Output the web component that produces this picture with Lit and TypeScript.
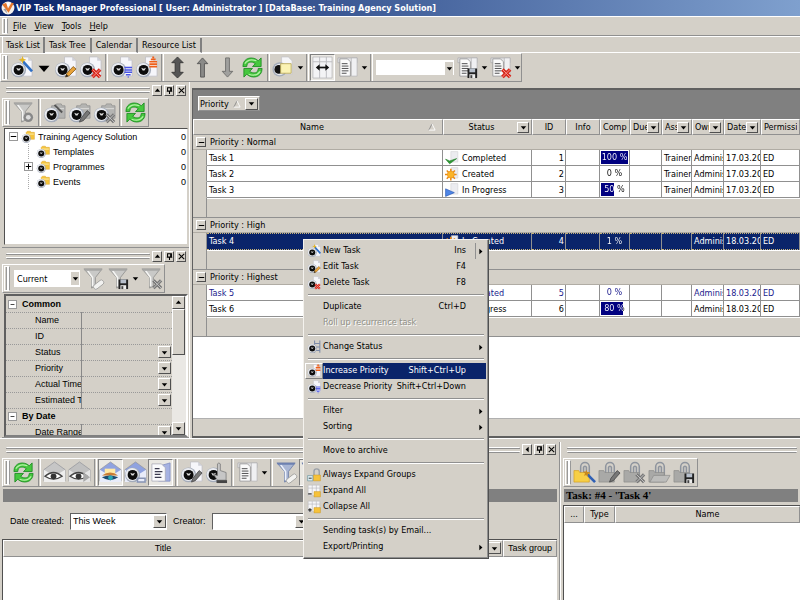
import { LitElement, html, svg, css, nothing, TemplateResult } from "lit";
import { customElement } from "lit/decorators.js";
import { classMap } from "lit/directives/class-map.js";
import { styleMap } from "lit/directives/style-map.js";

/* ---------- icon parts, all drawn in a 24 x 24 box ---------- */

const page = svg`<path d="M11 1h8l4 4v16H11z" fill="#f6f6fa" stroke="#b8b8c2" stroke-width=".7"/><path d="M19 1v4h4z" fill="#cfd0d8"/>`;
const clock = svg`<circle cx="9" cy="14.500" r="7.800" fill="#a4acba"/><circle cx="8.500" cy="14" r="6.800" fill="#e9ebf0"/><circle cx="9" cy="14.500" r="5.200" fill="#0c0c0c"/><path d="M6.500 12.300l2.500 1 2.500-1-1.600 2.700H8z" fill="#e0e0e0"/>`;
const greyFolder = svg`<path d="M9 5h4l1-2h5l1 2h3v13H9z" fill="#b4b4b2" stroke="#8c8c8a" stroke-width=".7"/><path d="M10 8h12" stroke="#dcdcda"/>`;
const yellowFolder = svg`<path d="M9 4l2-2h5l1 2h6v12H9z" fill="#f5c43c" stroke="#d59a1c" stroke-width=".7"/><path d="M10 7h12" stroke="#fbe79a" stroke-width="2"/>`;
const wand = svg`<path d="M13 5l10 11" stroke="#2f6fc4" stroke-width="2.800"/><path d="M13 0l1.200 2.800L17 4l-2.800 1.200L13 8l-1.200-2.800L9 4l2.800-1.200z" fill="#e2b52a"/>`;
const pencil = svg`<path d="M12 22l1.500-4L20 11l3 2.500L16 20.500z" fill="#e8a33a" stroke="#7d5418" stroke-width=".8"/><path d="M12 22l1-3 2 2z" fill="#222"/>`;
const greyPencil = svg`<path d="M12 22l1.500-4L20 10l3 2.500L16 20.500z" fill="#777" stroke="#444" stroke-width=".8"/>`;
const redCross = svg`<path d="M14 14l8 8M22 14l-8 8" stroke="#d8281c" stroke-width="3.800"/><path d="M14 14l8 8M22 14l-8 8" stroke="#f6948a" stroke-width="1"/>`;
const greyCross = svg`<path d="M14 14l8 8M22 14l-8 8" stroke="#777" stroke-width="3.400"/><path d="M14 14l8 8M22 14l-8 8" stroke="#c4c4c4" stroke-width="1"/>`;
const blueDown = svg`<path d="M15 12h8M15 14.500h8M15 17h8M16.500 19.500h5M18.500 22h1" stroke="#4a55e4" stroke-width="1.600"/>`;
const orangeUp = svg`<path d="M18 1.500h2M16.500 3.500h5M15 6h8M15 8.500h8M15 11h8" stroke="#ee5f18" stroke-width="1.800"/>`;
const disk = svg`<path d="M12 13h10v10H12z" fill="#222"/><path d="M14 13h6v4h-6z" fill="#b8c0cc"/><path d="M14 19h6v4h-6z" fill="#eee"/><path d="M15 20h2v3h-2z" fill="#444"/>`;
const funnelShape = "M2 2h19l-7 9v9l-4 2V11z";
const funnel = svg`<path d=${funnelShape} fill="#c9c9c7" stroke="#8b8b89" stroke-width=".8"/><path d="M6 4l5 7v9" fill="none" stroke="#f6f6f4" stroke-width="1.600"/><path d="M2 2h19l-1 2H3z" fill="#a6a6a4"/>`;
const blueFunnel = svg`<path d=${funnelShape} fill="#a9b6d4" stroke="#6678a4" stroke-width=".8"/><path d="M6 4l5 7v9" fill="none" stroke="#eef2fb" stroke-width="1.600"/><path d="M2 2h19l-1 2H3z" fill="#6d80b0"/>`;
const eraser = svg`<rect x="11" y="16" width="12" height="5" rx="2" transform="rotate(-38 17 18)" fill="#f2f2f0" stroke="#9a9a98" stroke-width=".8"/>`;
const columns = svg`<path d="M2 2h20v5H2z" fill="#e4e4e6" stroke="#a8a8aa" stroke-width=".7"/><path d="M16 2h6v19h-6z" fill="#f0f0f2" stroke="#b0b0b2" stroke-width=".7"/><path d="M4 3h8l3 3v15H4z" fill="#fafafa" stroke="#8e8e90" stroke-width=".8"/><path d="M6 8h6M6 10.500h7M6 13h7M6 15.500h7M6 18h5" stroke="#4a4a4c"/>`;
const clip = svg`<path d="M8 15V6a4.500 4.500 0 019 0V15M11 14V6.500a1.600 1.600 0 013 0v7" fill="none" stroke="#8e949e" stroke-width="1.600"/>`;
const clipFolder = (fill: string, edge: string) => svg`${clip}<path d="M1 10h5l1 2h10v10H1z" fill=${fill} stroke=${edge} stroke-width=".7"/>`;
const envelope = (a: string, b: string) => svg`<path d="M1 9l11-8 11 8v12H1z" fill=${a} stroke="#8e9098" stroke-width=".7"/><path d="M1 9l11 7 11-7v13H1z" fill=${b}/>`;
const eye = svg`<path d="M2 16q9-8 18 0q-9 6-18 0z" fill="#fff" stroke="#444" stroke-width="1.300"/><circle cx="11" cy="16" r="3" fill="#333"/>`;
const sheet = svg`<path d="M2 2h20v18H2z" fill="#f6f6f8" stroke="#b4b4b8" stroke-width=".8"/><path d="M2 7h20M9 2v18M16 2v18" stroke="#b4b4b8"/>`;

const icons: Record<string, TemplateResult> = {
  logo: svg`<circle cx="12" cy="12" r="11" fill="#f3f0ec"/><path d="M2 6l7-3 3 10 6-10 4 1-9 16z" fill="#e4762c"/><path d="M4 14l7 8-3-9z" fill="#9a9aa2"/><path d="M9 3l6-1-3 8z" fill="#fff"/>`,
  newTask: svg`${page}${clock}${wand}`,
  editTask: svg`${page}${clock}${pencil}`,
  deleteTask: svg`${page}${clock}${redCross}`,
  lower: svg`${page}${clock}${blueDown}`,
  raise: svg`${page}${clock}${orangeUp}`,
  status: svg`<path d="M13 1v21M22 1v21M13 6h9M13 12h9M13 18h9" stroke="#7d8ba8" stroke-width="1.800"/>${clock}`,
  upDown: svg`<path d="M12 1l6 6h-3.500v10H18l-6 6-6-6h3.500V7H6z" fill="#555" stroke="#2e2e2e" stroke-width=".8"/>`,
  up: svg`<path d="M12 2l5.500 6H14v14h-4V8H6.500z" fill="#8a8a88" stroke="#505050" stroke-width=".9"/>`,
  down: svg`<path d="M12 22l5.500-6H14V2h-4v14H6.500z" fill="#a0a09e" stroke="#6a6a68" stroke-width=".9"/>`,
  refresh: svg`<path d="M2 11C2 1 13 0 18 5l3-3v9h-9l3-3C11 5 6 6 6 11z" fill="#46c83e" stroke="#1d8a22" stroke-width=".9"/><path d="M22 13c0 10-11 11-16 6l-3 3v-9h9l-3 3c4 3 9 2 9-3z" fill="#46c83e" stroke="#1d8a22" stroke-width=".9"/><path d="M4 8q4-6 12-3M20 16q-4 6-12 3" fill="none" stroke="#b5f2a6" stroke-width="1.200"/>`,
  note: svg`<path d="M10 1h7l4 4v14H10z" fill="#f6f6f8" stroke="#c0c0c8" stroke-width=".7"/><circle cx="8" cy="14" r="7.500" fill="#a4acba"/><circle cx="8" cy="14" r="6" fill="#e9ebf0"/><circle cx="7" cy="14" r="4.500" fill="#111"/><path d="M9 8h11v10H9z" fill="#fbf3b4" stroke="#b7a757" stroke-width=".9"/>`,
  fit: svg`<path d="M2 1h20v22H2z" fill="#f3f3f5" stroke="#b4b4b6" stroke-width=".8"/><path d="M2 6h20M9 1v22M16 1v22" stroke="#bcbcc0"/><path d="M7 12h10" stroke="#111" stroke-width="1.800"/><path d="M5 12l4-3.500v7zM19 12l-4-3.500v7z" fill="#111"/>`,
  columns,
  columnsSave: svg`${columns}${disk}`,
  columnsDelete: svg`${columns}${redCross}`,
  funnelClock: svg`${funnel}<circle cx="17" cy="17" r="5" fill="#888"/><circle cx="17" cy="17" r="2.500" fill="#ddd"/>`,
  folderNew: svg`${greyFolder}${clock}<path d="M12 4l8 8" stroke="#555" stroke-width="2"/>`,
  folderEdit: svg`${greyFolder}${clock}${greyPencil}`,
  folderDelete: svg`${greyFolder}${clock}${greyCross}`,
  treeFolder: svg`${yellowFolder}${clock}`,
  funnelErase: svg`${funnel}${eraser}`,
  funnelSave: svg`${funnel}${disk}`,
  funnelDelete: svg`${funnel}${greyCross}`,
  blueFunnelErase: svg`${blueFunnel}${eraser}`,
  blueFunnel,
  eyeOpen: svg`${envelope("#c6c6c6", "#eeeeee")}${eye}`,
  eyeStep: svg`${envelope("#c0c0c0", "#e4e4e4")}${eye}<path d="M16 12l7 5-7 5z" fill="#a8a8a8"/>`,
  mailEye: svg`${envelope("#8fa2e0", "#e8ecfa")}<path d="M6 8h11v7H6z" fill="#ffe9a6"/><path d="M3 15q9-6 17 0z" fill="#c97b35"/><path d="M3 17q9 6 17 0q-9-4-17 0z" fill="#1b4a70"/><circle cx="12" cy="17.500" r="2.500" fill="#29a7b5"/>`,
  mailClock: svg`${envelope("#8fa2e0", "#e8ecfa")}${clock}<path d="M14 18h8v4h-8z" fill="none" stroke="#8794b4" stroke-width="1.600"/>`,
  mailPage: svg`<path d="M8 6l14-4v19H10z" fill="#a6b2e2" stroke="#7f8cc0" stroke-width=".8"/><path d="M3 3h10l4 4v14H3z" fill="#fafafc" stroke="#a8a8b4" stroke-width=".8"/><path d="M6 8h5M6 11h8M6 14h6M6 17h7" stroke="#3c3c50" stroke-width="1.300"/>`,
  clockEdit: svg`${page}${clock}${greyPencil}`,
  clockHand: svg`${clock}<path d="M13 3q1.500-2 3 0v7l6 2v8h-9l-4-6 4 1z" fill="#c6c6c6" stroke="#777" stroke-width=".8"/><path d="M12 20h11v3H12z" fill="#444"/>`,
  clipNew: svg`${clipFolder("#f7cf46", "#d09c22")}<path d="M15 14l8 8" stroke="#2f5fb4" stroke-width="2.800"/><path d="M14 9l1 2.500 3 .5-2.500 1.500.5 3-2-2-2.500 1 1-2.500-2-2h3z" fill="#c98a1c"/>`,
  clipEdit: svg`${clipFolder("#a9a9a7", "#8a8a88")}${greyPencil}`,
  clipDelete: svg`${clipFolder("#a9a9a7", "#8a8a88")}${greyCross}`,
  clipOpen: svg`${clipFolder("#a9a9a7", "#8a8a88")}<path d="M6 15h17l-4 7H2z" fill="#bdbdbb" stroke="#8a8a88" stroke-width=".7"/>`,
  clipSave: svg`${clipFolder("#a9a9a7", "#8a8a88")}${disk}`,
  lock: svg`<path d="M12 12V6a4.500 4.500 0 019 0v6" fill="none" stroke="#9aa0a8" stroke-width="2.400"/><path d="M11 12h12v10H11z" fill="#f6c23a" stroke="#c8921c" stroke-width=".8"/><path d="M1 13h9v9H1z" fill="#dcecf0" stroke="#5f8a94"/><path d="M3 17.500h5" stroke="#222" stroke-width="1.500"/>`,
  expand: svg`${sheet}<path d="M12 13h11v9H12z" fill="#f6c23a" stroke="#c8921c" stroke-width=".8"/><path d="M2 17h6" stroke="#222" stroke-width="2"/>`,
  collapse: svg`${sheet}<path d="M12 13h11v9H12z" fill="#f6c23a" stroke="#c8921c" stroke-width=".8"/><path d="M2 17h6M5 14v6" stroke="#222" stroke-width="2"/>`,
  completed: svg`<path d="M10 1h12v18H10z" fill="#ececf0" stroke="#c8c8cc" stroke-width=".8"/><path d="M1 14l7 8 12-9-12 4z" fill="#2f9a34" stroke="#1c7a24"/>`,
  created: svg`<path d="M11 1h11v18H11z" fill="#ececf0" stroke="#c8c8cc" stroke-width=".8"/><path d="M10 3v20M0 13h20M3 6l14 14M17 6L3 20" stroke="#e98a14" stroke-width="2.600"/><circle cx="10" cy="13" r="6" fill="#fbb528" stroke="#e98a14"/>`,
  progress: svg`<path d="M10 1h12v18H10z" fill="#ececf0" stroke="#c8c8cc" stroke-width=".8"/><path d="M1 10l15 6.500L1 23z" fill="#4f86e6" stroke="#1f4fae"/>`,
};

const icon = (name: string, cls = "i22") =>
  html`<svg class=${cls} viewBox="0 0 24 24" aria-hidden="true">${icons[name]}</svg>`;

const solid: Record<string, string> = {
  down: "M1 3h7L4.500 7z",
  up: "M1 6h7L4.500 2z",
  left: "M6 1v7L2 4.500z",
  right: "M3 1v7l4-3.500z",
};
const lines: Record<string, string> = {
  close: "M1 1l7 7M8 1L1 8",
  pin: "M2 1h5v4H2zM6 1v4M1 5.500h7M4.500 5v4",
  minus: "M1 4.500h7",
  plus: "M1 4.500h7M4.500 1v7",
};
const glyph = (name: string, cls = "g7") => html`<svg class=${cls} viewBox="0 0 9 9" aria-hidden="true">
  <path d=${solid[name] ?? lines[name]} fill=${name in solid ? "currentColor" : "none"}
    stroke=${name in solid ? "none" : "currentColor"} stroke-width="1.300"/></svg>`;
const sortMark = html`<svg class="sort" viewBox="0 0 9 9" aria-hidden="true"><path d="M1 8l3.500-7" stroke="#888" fill="none"/><path d="M1 8h7L4.500 1" stroke="#fff" fill="none"/></svg>`;

/* ---------- shared look ---------- */

const shared = css`
  * { box-sizing: border-box; }
  button, select, input { font: inherit; color: inherit; margin: 0; padding: 0; border: 0; border-radius: 0; background: none; outline: 0; }
  svg { display: block; flex: none; }
  .i22 { width: 23px; height: 23px; }
  .i14 { width: 14px; height: 14px; }
  .g5 { width: 5px; height: 5px; }
  .g7 { width: 7px; height: 7px; }
  .g9 { width: 9px; height: 9px; }
  .g14 { width: 14px; height: 14px; }
  .raised { display: grid; place-items: center; flex: none; background: #d4d0c8; border: 1px solid; border-color: #fff #505050 #505050 #fff; }
  .drop { width: 13px; height: 12px; }
  .grip { flex: none; width: 6px; margin: 1px 1px; border: 1px solid #999; border-color: #fff #999 #fff #fff; background: linear-gradient(90deg, #d4d0c8 1px, #999 1px, #999 2px, #fff 2px); }
`;

/* A strip of icon buttons. Entries: icon name, "|" separator, "v" drop arrow, "V" large drop arrow, "*name" pressed. */
@customElement("tool-strip")
export class ToolStrip extends LitElement {
  static properties = { items: { attribute: false } };
  declare items: string[];
  static styles = [shared, css`
    :host { display: flex; flex: none; height: 29px; width: max-content; border: 1px solid; border-color: #fff #909090 #909090 #fff; align-items: stretch; }
    .tool { width: 25px; display: grid; place-items: center; flex: none; }
    .pressed { border: 1px solid; border-color: #808080 #fff #fff #808080; background: #eae8e3; }
    .small { width: 8px; }
    .large { width: 19px; }
    .sep { width: 3px; margin: 0 1px 0 2px; border-left: 1px solid #909090; border-right: 1px solid #fff; flex: none; }
  `];
  render() {
    return html`<span class="grip"></span>${(this.items ?? []).map((it) => {
      if (it === "|") return html`<span class="sep"></span>`;
      if (it === "-") return html`<slot></slot>`;
      if (it === "v" || it === "V")
        return html`<button class=${classMap({ tool: true, small: it === "v", large: it === "V" })} aria-label="More">${glyph("down", it === "v" ? "g7" : "g14")}</button>`;
      const on = it.startsWith("*");
      const name = on ? it.slice(1) : it;
      return html`<button class=${classMap({ tool: true, pressed: on })} aria-label=${name}>${icon(name)}</button>`;
    })}`;
  }
}

@customElement("dock-caption")
export class DockCaption extends LitElement {
  static properties = { arrow: { type: String } };
  declare arrow: string;
  static styles = [shared, css`
    :host { display: flex; flex: none; height: 16px; align-items: center; gap: 2px; padding: 0 3px 0 4px; }
    .bars { flex: 1; height: 6px; border: 1px solid; border-color: #fff transparent #909090; background: linear-gradient(#909090 1px, transparent 1px, transparent 3px, #fff 3px); }
    .cap { width: 10px; height: 11px; }
  `];
  render() {
    return html`<span class="bars"></span>${this.arrow
      ? [this.arrow, "pin", "close"].map((g) => html`<button class="raised cap" aria-label=${g}>${glyph(g)}</button>`)
      : nothing}`;
  }
}

@customElement("combo-box")
export class ComboBox extends LitElement {
  static properties = { value: { type: String }, label: { type: String }, flat: { type: Boolean, reflect: true } };
  declare value: string;
  declare label: string;
  declare flat: boolean;
  static styles = [shared, css`
    :host { display: grid; height: 17px; background: #fff; border: 1px solid; border-color: #606060 #fff #fff #606060; align-self: center; }
    :host([flat]) { border-color: #fff; }
    select { grid-area: 1 / 1; appearance: none; width: 100%; padding-left: 2px; }
    .drop { grid-area: 1 / 1; justify-self: end; align-self: center; pointer-events: none; height: 13px; }
    .plain { border: 0; width: 8px; }
  `];
  render() {
    return html`<select aria-label=${this.label}><option>${this.value}</option></select>
      <span class=${classMap({ raised: true, drop: true, plain: this.flat })}>${glyph("down")}</span>`;
  }
}

/* ---------- data ---------- */

interface Task { name: string; status: string; icon: string; id: number; done: number; assigned: string; date: string; tone?: string }
const groups: { title: string; tasks: Task[] }[] = [
  { title: "Normal", tasks: [
    { name: "Task 1", status: "Completed", icon: "completed", id: 1, done: 100, assigned: "Trainer", date: "17.03.2008" },
    { name: "Task 2", status: "Created", icon: "created", id: 2, done: 0, assigned: "Trainer", date: "17.03.2008" },
    { name: "Task 3", status: "In Progress", icon: "progress", id: 3, done: 50, assigned: "Trainer", date: "17.03.2008" },
  ] },
  { title: "High", tasks: [
    { name: "Task 4", status: "In Created", icon: "created", id: 4, done: 1, assigned: "", date: "18.03.2008", tone: "selected" },
  ] },
  { title: "Highest", tasks: [
    { name: "Task 5", status: "In Created", icon: "created", id: 5, done: 0, assigned: "", date: "18.03.2008", tone: "fresh" },
    { name: "Task 6", status: "In Progress", icon: "progress", id: 6, done: 80, assigned: "", date: "18.03.2008" },
  ] },
];

const menu: ({ label: string; key?: string; icon?: string; sub?: boolean; split?: boolean; off?: boolean; hot?: boolean } | null)[] = [
  { label: "New Task", key: "Ins", icon: "newTask", sub: true, split: true },
  { label: "Edit Task", key: "F4", icon: "editTask" },
  { label: "Delete Task", key: "F8", icon: "deleteTask" },
  null,
  { label: "Duplicate", key: "Ctrl+D" },
  { label: "Roll up recurrence task", off: true },
  null,
  { label: "Change Status", icon: "status", sub: true },
  null,
  { label: "Increase Priority", key: "Shift+Ctrl+Up", icon: "raise", hot: true },
  { label: "Decrease Priority", key: "Shift+Ctrl+Down", icon: "lower" },
  null,
  { label: "Filter", sub: true },
  { label: "Sorting", sub: true },
  null,
  { label: "Move to archive" },
  null,
  { label: "Always Expand Groups", icon: "lock" },
  { label: "Expand All", icon: "expand" },
  { label: "Collapse All", icon: "collapse" },
  null,
  { label: "Sending task(s) by Email..." },
  { label: "Export/Printing", sub: true },
];

const heads: [string, boolean][] = [["Status", true], ["ID", false], ["Info", false], ["Complete", false], ["Due", true], ["Assigned", true], ["Owner", true], ["Date", true], ["Permission", false]];

@customElement("app-root")
export class AppRoot extends LitElement {
  static styles = [shared, css`
    :host { --tahoma: "DejaVu Sans Condensed", "Liberation Sans", sans-serif; --plain: "Liberation Sans", sans-serif; display: flex; flex-direction: column; height: 100vh; overflow: hidden; position: relative; background: #d4d0c8; color: #000; font: 9px/14px var(--tahoma); white-space: nowrap; }
    .title { display: flex; flex: none; align-items: center; gap: 1px; height: 16px; padding-left: 1px; background: linear-gradient(90deg, #0a246a, #7fa0ce); color: #fff; font-weight: bold; font-size: 9px; margin: 0; }
    .menubar { display: flex; flex: none; height: 20px; border-top: 1px solid #fff; border-bottom: 1px solid #909090; padding-left: 1px; }
    .menubar button { padding: 0 4px; }
    .menubar .grip { margin-right: 1px; }
    u { text-underline-offset: 1px; }
    .tabs { display: flex; flex: none; height: 17px; border-top: 1px solid #fff; padding-left: 2px; }
    .tab { padding: 0 4px; border-right: 2px solid #808080; border-bottom: 1px solid #fff; margin-top: 1px; }
    .tab.on { border-bottom: 0; margin-top: 0; border-left: 1px solid #fff; padding: 0 3px; }
    .rest { flex: 1; border-bottom: 1px solid #fff; }
    .main { flex: 355 1 0; min-height: 0; display: flex; }
    .side { flex: none; width: 190px; display: flex; flex-direction: column; padding-left: 2px; border-right: 1px solid #fff; font-family: var(--plain); }
    .part { display: flex; flex-direction: column; min-height: 0; border-bottom: 1px solid #909090; }
    .part.a { flex: 166 1 0; }
    .part.b { flex: 189 1 0; }
    .tree { flex: 1; margin: 1px 1px 2px 2px; background: #fff; border: 1px solid; border-color: #505050 #d4d0c8 #d4d0c8 #505050; padding: 0; list-style: none; }
    .tree li { display: flex; align-items: center; height: 15px; gap: 3px; padding: 0 1px 0 4px; }
    .tree .kid { padding-left: 19px; }
    .tree .n { flex: 1; }
    .box { width: 9px; height: 9px; flex: none; border: 1px solid #999; background: #fff; display: grid; place-items: center; }
    .box.none { border: 0; border-right: 1px dotted #aaa; width: 5px; margin-right: 4px; height: 15px; }
    .props { flex: 1; min-height: 0; display: flex; margin: 1px 1px 0 2px; border: 2px solid; border-color: #606060 #fff #808080 #606060; overflow: hidden; }
    .ptable { flex: 1; width: 100%; table-layout: fixed; border-collapse: collapse; align-self: flex-start; }
    .c-key { width: 75px; }
    .ptable td, .ptable th { height: 16px; padding: 0; border-bottom: 1px dotted #999; font-weight: normal; text-align: left; line-height: 14px; overflow: hidden; }
    .ptable .k { padding-left: 29px; border-right: 1px solid #888; }
    .ptable .cat { font-weight: bold; }
    .catrow { display: flex; align-items: center; gap: 5px; padding-left: 2px; }
    .ptable .drop { margin-left: auto; margin-right: 1px; }
    .scroll { flex: none; width: 14px; display: flex; flex-direction: column; background: #eae8e4; }
    .scroll .arrow { height: 13px; width: 13px; }
    .thumb { width: 13px; height: 46px; }
    .track { flex: 1; }
    .gridpane { flex: 1; min-width: 0; margin-top: 6px; margin-left: 2px; border: 1px solid #606060; border-width: 2px 0 2px 1px; background: #fff; display: flex; flex-direction: column; }
    .band { flex: none; height: 29px; background: #808080; padding: 6px 5px; }
    .chip { display: flex; align-items: center; gap: 4px; width: max-content; height: 15px; padding: 0 1px; background: #d4d0c8; border: 1px solid; border-color: #fff #909090 #909090 #fff; }
    .sort { width: 8px; height: 8px; }
    .tasks { width: 100%; table-layout: fixed; border-collapse: separate; border-spacing: 0; background: #fff; }
    .tasks th { height: 16px; padding: 0 2px; font-weight: normal; background: #d4d0c8; border: 1px solid; border-color: #fff #909090 #909090 #fff; line-height: 12px; overflow: hidden; }
    .h { display: flex; align-items: center; height: 14px; }
    .h .t { flex: 1; min-width: 0; overflow: hidden; }
    .h.l { text-align: left; }
    .h .sort { margin-right: 4px; }
    .h .drop { height: 11px; width: 12px; }
    .c-in { width: 14px; } .c-st { width: 89px; } .c-34 { width: 34px; } .c-30 { width: 30px; } .c-32 { width: 32px; } .c-37 { width: 37px; } .c-39 { width: 39px; }
    .tasks td { padding: 0 1px 0 2px; height: 16px; line-height: 14px; overflow: hidden; border-right: 1px solid #909090; border-bottom: 1px solid #909090; }
    .tasks .g { height: 15px; line-height: 13px; background: #d4d0c8; border-right: 0; border-bottom: 1px solid #b0aca4; }
    .gr { display: flex; align-items: center; gap: 4px; height: 13px; padding-left: 1px; }
    .gr .raised { width: 10px; height: 10px; }
    .tasks .in { background: #d4d0c8; border-bottom-color: #d4d0c8; }
    .tasks .foot { height: 20px; background: #d4d0c8; border-right: 0; border-top: 1px solid #fff; }
    .tasks .in.last { border-bottom-color: #909090; }
    .st { display: flex; align-items: center; gap: 3px; height: 14px; }
    .tasks .num { text-align: right; }
    .fresh td { color: #1a1a8c; }
    .selected td { background: #0a246a; color: #fff; border-top: 1px dotted #c8b478; border-bottom: 1px dotted #c8b478; line-height: 13px; }
    .selected .in { border-top: 0; border-bottom: 0; }
    .tasks .pc { padding: 1px 1px; }
    .bar { display: block; height: 13px; line-height: 13px; background: linear-gradient(90deg, #000080 var(--p), transparent var(--p)); }
    .bar span { display: block; text-align: center; color: transparent; background: linear-gradient(90deg, #fff var(--p), var(--ink) var(--p)); background-clip: text; -webkit-background-clip: text; --ink: #111; }
    .fresh .bar span { --ink: #1a1a8c; }
    .selected .bar { background: none; line-height: 12px; }
    .selected .bar span { --ink: #fff; }
    .fill { flex: 1; }
    .status { flex: none; height: 18px; background: #d4d0c8; border-top: 1px solid #b0b0b0; }
    .bottom { flex: 158 1 0; min-height: 0; display: flex; padding-top: 3px; border-top: 1px solid #fff; font-family: var(--plain); }
    .log { flex: 0 0 70%; min-width: 0; display: flex; flex-direction: column; padding-left: 2px; border-right: 1px solid #909090; overflow: hidden; }
    .files { flex: 1; min-width: 0; display: flex; flex-direction: column; padding-left: 2px; border-left: 1px solid #fff; font-family: var(--tahoma); }
    .dark { flex: none; height: 13px; background: #808080; margin: 2px 2px 0 1px; font: bold 11px/13px "Liberation Serif", serif; padding-left: 2px; }
    .filters { flex: none; display: flex; align-items: center; height: 37px; padding: 2px 0 0 8px; gap: 6px; }
    .wide { width: 97px; }
    .view { width: 66px; margin: 0 1px 0 3px; font-family: var(--tahoma); }
    .find { width: 78px; height: 15px; margin: 0 1px 0 2px; }
    .list { flex: 1; min-height: 0; background: #fff; border: 1px solid #505050; border-width: 1px 0 0 1px; margin-right: 2px; }
    .list table { width: 100%; table-layout: fixed; border-collapse: separate; border-spacing: 0; }
    .list th { height: 17px; padding: 0 1px; font-weight: normal; background: #d4d0c8; border: 1px solid; border-color: #fff #909090 #909090 #fff; line-height: 14px; }
    .c-title { width: 320px; } .c-mid { width: 180px; } .c-dots { width: 20px; } .c-type { width: 31px; }
    .push { margin-left: auto; }
    .files .list { margin-top: 3px; margin-right: 0; }
    .popup { position: absolute; left: 303px; top: 239px; width: 186px; padding: 3px 1px; background: #d4d0c8; border: 1px solid; border-color: #f4f2ee #505050 #505050 #f4f2ee; box-shadow: inset -1px -1px #909090; }
    .item { display: grid; grid-template-columns: 18px 1fr auto 20px; align-items: center; width: 100%; height: 16px; text-align: left; padding-right: 1px; }
    .item .ic { height: 16px; display: grid; place-items: center; }
    .item .tx { height: 16px; line-height: 15px; }
    .item .ar { height: 16px; display: grid; align-items: center; justify-items: end; padding-right: 2px; }
    .item .split { border-left: 1px solid #909090; margin-left: 9px; }
    .off { color: #909088; text-shadow: 1px 1px #fff; }
    .hot .tx, .hot .ar { background: #0a246a; color: #fff; }
    .hot .ic { border: 1px solid; border-color: #fff #808080 #808080 #fff; }
    .rule { height: 2px; margin: 3px 3px; border-top: 1px solid #909090; border-bottom: 1px solid #fff; }
  `];

  private prop(name: string, drop = false) {
    return html`<tr><th class="k" scope="row">${name}</th><td>${drop ? html`<button class="raised drop" aria-label=${name}>${glyph("down")}</button>` : nothing}</td></tr>`;
  }
  private category(name: string) {
    return html`<tr><th class="cat" colspan="2"><div class="catrow"><button class="raised box" aria-label="Collapse ${name}">${glyph("minus", "g5")}</button>${name}</div></th></tr>`;
  }
  private leaf(name: string, closed = false) {
    return html`<li class="kid"><span class=${classMap({ box: true, none: !closed })}>${closed ? glyph("plus", "g7") : nothing}</span>${icon("treeFolder", "i14")}<span class="n">${name}</span>0</li>`;
  }
  private row(t: Task) {
    return html`<tr class=${t.tone ?? ""}><td class="in"></td><td>${t.name}</td>
      <td><div class="st">${icon(t.icon, "i14")}${t.status}</div></td><td class="num">${t.id}</td><td></td>
      <td class="pc"><span class="bar" style=${styleMap({ "--p": t.done + "%" })}><span>${t.done} %</span></span></td>
      <td></td><td>${t.assigned}</td><td>Administrator</td><td>${t.date}</td><td>ED</td></tr>`;
  }

  render() {
    return html`
      <h1 class="title">${icon("logo", "i14")}VIP Task Manager Professional [ User: Administrator ] [DataBase: Training Agency Solution]</h1>
      <nav class="menubar"><span class="grip"></span>
        <button><u>F</u>ile</button><button><u>V</u>iew</button><button><u>T</u>ools</button><button><u>H</u>elp</button></nav>
      <div class="tabs"><button class="tab on">Task List</button><button class="tab">Task Tree</button><button class="tab">Calendar</button><button class="tab">Resource List</button><span class="rest"></span></div>
      <tool-strip .items=${["newTask", "V", "editTask", "deleteTask", "|", "lower", "raise", "|", "upDown", "up", "down", "refresh", "|", "note", "v", "|", "*fit", "columns", "v", "|", "-", "columnsSave", "v", "columnsDelete", "v"]}>
        <combo-box class="find" flat label="View" value=""></combo-box></tool-strip>

      <div class="main">
        <aside class="side">
          <section class="part a">
            <dock-caption arrow="up"></dock-caption>
            <tool-strip .items=${["funnelClock", "|", "folderNew", "folderEdit", "folderDelete", "|", "refresh"]}></tool-strip>
            <ul class="tree">
              <li><span class="box">${glyph("minus")}</span>${icon("treeFolder", "i14")}<span class="n">Training Agency Solution</span>0</li>
              ${this.leaf("Templates")}${this.leaf("Programmes", true)}${this.leaf("Events")}
            </ul>
          </section>
          <section class="part b">
            <dock-caption arrow="up"></dock-caption>
            <tool-strip .items=${["-", "funnelErase", "funnelSave", "v", "funnelDelete"]}><combo-box class="view" flat label="Filter" value="Current"></combo-box></tool-strip>
            <div class="props">
              <table class="ptable"><colgroup><col class="c-key"><col></colgroup><tbody>
                ${this.category("Common")}
                ${this.prop("Name")}${this.prop("ID")}${this.prop("Status", true)}${this.prop("Priority", true)}${this.prop("Actual Time", true)}${this.prop("Estimated Time", true)}
                ${this.category("By Date")}
                ${this.prop("Date Range", true)}
              </tbody></table>
              <div class="scroll"><button class="raised arrow" aria-label="Scroll up">${glyph("up")}</button><span class="raised thumb"></span><span class="track"></span><button class="raised arrow" aria-label="Scroll down">${glyph("down")}</button></div>
            </div>
          </section>
        </aside>
        <section class="gridpane">
          <div class="band"><div class="chip">Priority ${sortMark}<button class="raised drop" aria-label="Priority filter">${glyph("down")}</button></div></div>
          <table class="tasks">
            <colgroup><col class="c-in"><col><col class="c-st"><col class="c-34"><col class="c-34"><col class="c-30"><col class="c-32"><col class="c-30"><col class="c-32"><col class="c-37"><col class="c-39"></colgroup>
            <thead><tr><th colspan="2"><div class="h"><span class="t">Name</span>${sortMark}</div></th>
              ${heads.map(([t, d], i) => html`<th><div class=${classMap({ h: true, l: i > 2 })}><span class="t">${t}</span>${d ? html`<button class="raised drop" aria-label="${t} filter">${glyph("down")}</button>` : nothing}</div></th>`)}</tr></thead>
            <tbody>${groups.map((g) => html`
              <tr><td class="g" colspan="11"><div class="gr"><button class="raised" aria-label="Collapse">${glyph("minus", "g7")}</button>Priority : ${g.title}</div></td></tr>
              ${g.tasks.map((t) => this.row(t))}
              <tr><td class="in last"></td><td class="foot" colspan="10"></td></tr>`)}</tbody>
          </table>
          <div class="fill"></div>
          <div class="status"></div>
        </section>
      </div>

      <div class="bottom">
        <section class="log">
          <dock-caption arrow="left"></dock-caption>
          <tool-strip .items=${["refresh", "|", "eyeOpen", "eyeStep", "|", "*mailEye", "mailClock", "*mailPage", "|", "clockEdit", "clockHand", "|", "columns", "v", "|", "blueFunnelErase", "*blueFunnel"]}></tool-strip>
          <div class="dark"></div>
          <div class="filters"><span>Date created:</span><combo-box class="wide" label="Date created" value="This Week"></combo-box><span>Creator:</span><combo-box class="wide" label="Creator" value=""></combo-box></div>
          <div class="list"><table><colgroup><col class="c-title"><col class="c-mid"><col></colgroup>
            <thead><tr><th>Title</th><th><button class="raised drop push" aria-label="Filter">${glyph("down")}</button></th><th>Task group</th></tr></thead></table></div>
        </section>
        <section class="files">
          <dock-caption></dock-caption>
          <tool-strip .items=${["clipNew", "clipEdit", "clipDelete", "clipOpen", "clipSave"]}></tool-strip>
          <div class="dark">Task: #4 - 'Task 4'</div>
          <div class="list"><table><colgroup><col class="c-dots"><col class="c-type"><col></colgroup>
            <thead><tr><th>...</th><th>Type</th><th>Name</th></tr></thead></table></div>
        </section>
      </div>

      <div class="popup" role="menu">${menu.map((m) => m === null ? html`<div class="rule"></div>` : html`
        <button role="menuitem" ?disabled=${!!m.off} class=${classMap({ item: true, hot: !!m.hot, off: !!m.off })}>
          <span class="ic">${m.icon ? icon(m.icon, "i14") : nothing}</span><span class="tx">${m.label}</span><span class="tx">${m.key ?? ""}</span>
          <span class=${classMap({ ar: true, split: !!m.split })}>${m.sub ? glyph("right") : nothing}</span></button>`)}</div>
    `;
  }
}
